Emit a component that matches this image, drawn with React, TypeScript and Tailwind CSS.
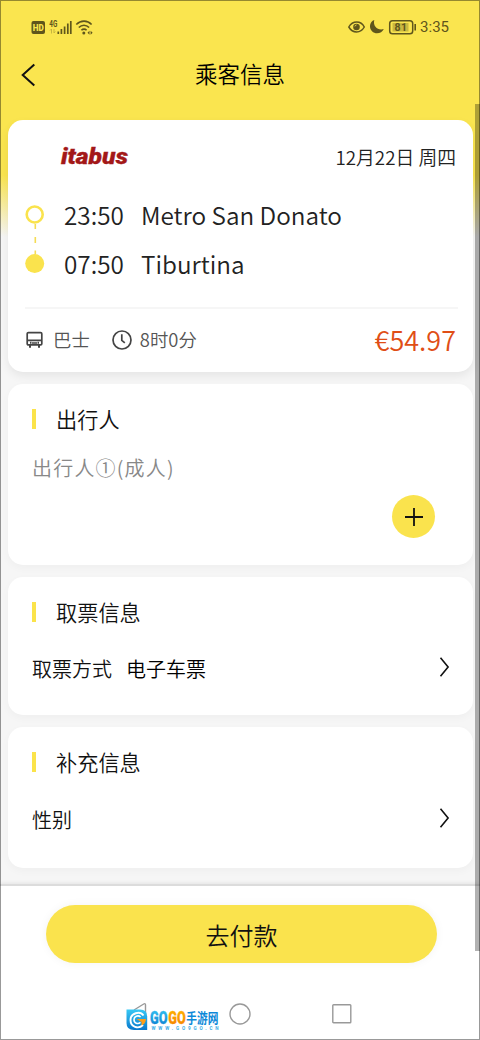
import React from 'react';

// ── Trip data ──────────────────────────────────────────────────────────────────
interface Stop {
  time: string;
  name: string;
}

const STOPS: Stop[] = [
  { time: '23:50', name: 'Metro San Donato' },
  { time: '07:50', name: 'Tiburtina' },
];

// ── Status bar ─────────────────────────────────────────────────────────────────
const StatusBar: React.FC = () => (
  <div className="flex h-[54px] items-center justify-between pl-[30px] pr-[31px] text-[#5f561c]">
    <svg width="64" height="18" viewBox="0 0 64 18" fill="none" aria-hidden="true">
      <rect x="1.5" y="3" width="13.5" height="13" rx="2" fill="currentColor" />
      <text x="2.7" y="12.8" fontSize="8.5" fontWeight="900" fontFamily="Roboto, sans-serif" fill="#fae54d" textLength="11" lengthAdjust="spacingAndGlyphs">HD</text>
      <text x="19.3" y="8.8" fontSize="8.5" fontWeight="700" fontFamily="Roboto, sans-serif" fill="currentColor" textLength="8" lengthAdjust="spacingAndGlyphs">4G</text>
      <path d="M21.5 11v4.5M21.5 11 20 12.5M24 15v-4M24 15l1.3-1.5" stroke="#c7b53f" strokeWidth="1" />
      <path d="M28.3 13.5V16M31.4 11V16M34.6 8.5V16M37.8 5.5V16M40.8 3V16" stroke="currentColor" strokeWidth="1.7" />
      <path d="M46.3 6.5c4.5-4.5 11-4.5 15.3 0M48.8 9.5c3.1-3.1 7.3-3.1 10.3 0M51.4 12.3c1.6-1.6 3.7-1.6 5.2 0" stroke="currentColor" strokeWidth="1.6" />
      <circle cx="53.8" cy="15" r="1.5" fill="currentColor" />
      <path d="m59.5 12.7-2 2 2 2zM60.6 12.7l2 2-2 2z" fill="currentColor" />
    </svg>
    <div className="flex items-center">
      <svg width="70" height="18" viewBox="0 0 70 18" fill="none" aria-hidden="true">
        <path d="M.8 9C4.6 2.3 12.9 2.3 16.3 9 12.6 15.5 4.6 15.5.8 9Z" stroke="currentColor" strokeWidth="1.5" />
        <circle cx="8.5" cy="9" r="3.3" fill="currentColor" />
        <path d="M6.9 8.4a2 2 0 0 1 1.6-1.5" stroke="#fae54d" strokeWidth=".9" />
        <path d="M26.3 2C21.5 3.6 20.7 10 24 13.2c3.6 3.6 10 2.2 11.8-2.2C30.500 13 24.500 8.500 26.300 2Z" fill="currentColor" />
        <rect x="41.7" y="2.7" width="23" height="13" rx="2.8" stroke="currentColor" strokeWidth="1.5" />
        <rect x="44.5" y="5" width="16" height="8.5" fill="#c9b840" />
        <text x="46.5" y="13" fontSize="10.5" fontWeight="700" fontFamily="Roboto, sans-serif" fill="currentColor" textLength="12.5">81</text>
        <path d="M67.2 6v6.5" stroke="currentColor" strokeWidth="1.6" />
      </svg>
      <span className="ml-[2px] font-[Roboto,sans-serif] text-[15px] font-normal leading-[18px]">3:35</span>
    </div>
  </div>
);

// ── Carrier logo ───────────────────────────────────────────────────────────────
const CarrierLogo: React.FC = () => (
  <svg width="76" height="24" viewBox="0 0 76 24" aria-label="itabus">
    <text
      x="1"
      y="19"
      fontFamily="Roboto, sans-serif"
      fontSize="21.5"
      fontWeight="900"
      fontStyle="italic"
      fill="#a31818"
      stroke="#a31818"
      strokeWidth=".3"
      textLength="67"
      lengthAdjust="spacingAndGlyphs"
    >
      itabus
    </text>
  </svg>
);

// ── Building blocks ────────────────────────────────────────────────────────────
const SectionTitle: React.FC<{ children: React.ReactNode }> = ({ children }) => (
  <div className="flex h-[31px] items-center">
    <span className="mb-[1px] h-5 w-1 bg-[#fbe34a]" />
    <h2 className="mb-0.5 ml-5 text-[21.2px] font-[350] leading-[30px]">{children}</h2>
  </div>
);

const Chevron: React.FC = () => (
  <svg width="12" height="22" viewBox="0 0 12 22" fill="none" aria-hidden="true">
    <path d="m1.5 1.8 7.6 9.2-7.6 9.2" stroke="#111" strokeWidth="1.6" />
  </svg>
);

// ── Itinerary card ─────────────────────────────────────────────────────────────
const TripCard: React.FC = () => (
  <section className="h-[252px] rounded-[15px] bg-white pl-[17px] pr-[17px] pt-[21px] shadow-[0_4px_10px_rgba(0,0,0,0.07)]">
    <div className="flex h-8 items-center justify-between pl-[35px]">
      <CarrierLogo />
      <span className="text-[18.8px] text-[#222]">12月22日 周四</span>
    </div>

    <div className="mt-[17px] flex">
      <svg width="20" height="98" viewBox="0 0 20 98" fill="none" aria-hidden="true">
        <circle cx="9.7" cy="24.5" r="8" stroke="#fae34d" strokeWidth="2.6" />
        <path d="M10.3 34v5M10.3 47v6M10.3 60.5v4" stroke="#f5dc55" strokeWidth="1.6" />
        <circle cx="9.7" cy="73.6" r="9.5" fill="#fae34d" />
      </svg>
      <div className="flex flex-col">
        {STOPS.map((s) => (
          <div key={s.time} className="flex h-[49px] items-end text-[24.3px] leading-[49px] text-[#222]">
            <span className="ml-[19px] w-[77px]">{s.time}</span>
            <span className="whitespace-nowrap">{s.name}</span>
          </div>
        ))}
      </div>
    </div>

    <div className="mt-[19px] -mr-0.5 h-0.5 bg-[#f6f6f6]" />

    <div className="flex h-[62px] items-center text-[18.4px] text-[#555]">
      <svg className="ml-[1px]" width="18" height="18" viewBox="0 0 18 18" fill="none" stroke="#444" aria-hidden="true">
        <rect x="1.2" y="1.6" width="14.6" height="12.3" rx="1.2" strokeWidth="1.7" />
        <path d="M1.5 9.3h14M6 12h5" strokeWidth="1.7" />
        <path d="M4 11.8h1.5M11.5 11.8H13M4 14v2.7M13 14v2.7" strokeWidth="2" />
      </svg>
      <span className="ml-[9px]">巴士</span>
      <svg className="ml-[22px]" width="20" height="20" viewBox="0 0 20 20" fill="none" stroke="#444" strokeWidth="1.7" aria-hidden="true">
        <circle cx="10" cy="10" r="9" />
        <path d="M9.8 4.3v6l3 2.5" />
      </svg>
      <span className="ml-2">8时0分</span>
      <span className="ml-auto text-[27px] text-[#e04e16]">€54.97</span>
    </div>
  </section>
);

// ── Page ───────────────────────────────────────────────────────────────────────
const App: React.FC = () => (
  <main className="relative flex h-[1040px] w-[480px] flex-col overflow-hidden bg-[#f6f6f6] bg-[linear-gradient(180deg,#fae54f_0,#fae54f_175px,#f6f6f6_237px)] font-['Noto_Sans_CJK_SC',sans-serif] font-[350] text-[#111]">
    <StatusBar />

    <header className="grid h-[66px] grid-cols-[60px_1fr_60px] items-start">
      <button aria-label="返回" className="pl-5 pt-[9px]">
        <svg width="16" height="24" viewBox="0 0 16 24" fill="none">
          <path d="M14.3 1.5 2.7 12l11.6 10.5" stroke="#111" strokeWidth="2" />
        </svg>
      </button>
      <h1 className="pt-[3px] text-center text-[22.5px] font-[350] leading-8 text-black">乘客信息</h1>
    </header>

    <div className="flex h-[764px] flex-col gap-3 pl-2 pr-[7px]">
      <TripCard />

      <section className="h-[181px] rounded-[15px] bg-white pl-6 pr-[38px] pt-5 shadow-[0_3px_8px_rgba(0,0,0,0.03)]">
        <SectionTitle>出行人</SectionTitle>
        <p className="mt-[17px] text-[20px] leading-8 tracking-[1.2px] text-[#888]">出行人①(成人)</p>
        <div className="mt-[11px] flex justify-end">
          <button aria-label="添加" className="flex size-[43px] items-center justify-center rounded-full bg-[#fae34d]">
            <svg width="20" height="20" viewBox="0 0 20 20" fill="none">
              <path d="M10 1v18M1 10h18" stroke="#111" strokeWidth="1.8" />
            </svg>
          </button>
        </div>
      </section>

      <section className="h-[138px] rounded-[15px] bg-white pl-6 pr-[22px] pt-5 shadow-[0_3px_8px_rgba(0,0,0,0.03)]">
        <SectionTitle>取票信息</SectionTitle>
        <div className="mt-[23px] flex h-8 items-center text-[20px]">
          <span className="pt-[3px]">取票方式</span>
          <span className="ml-[14px] pt-[3px] text-black">电子车票</span>
          <span className="ml-auto"><Chevron /></span>
        </div>
      </section>

      <section className="h-[141px] rounded-[15px] bg-white pl-6 pr-[22px] pt-5 shadow-[0_3px_8px_rgba(0,0,0,0.03)]">
        <SectionTitle>补充信息</SectionTitle>
        <div className="mt-6 flex h-8 items-center text-[20px]">
          <span className="pt-[3px]">性别</span>
          <span className="ml-auto"><Chevron /></span>
        </div>
      </section>
    </div>

    <footer className="flex h-[156px] flex-col border-t-2 border-[#dcdcdc] bg-white shadow-[0_-1px_4px_rgba(0,0,0,0.08)]">
      <button className="ml-[46px] mt-[19px] h-[58px] w-[391px] rounded-full bg-[#fae34d] text-[24px] leading-[60px] shadow-[0_0_10px_rgba(0,0,0,0.05)]">
        去付款
      </button>

      {/* System navigation keys */}
      <nav className="mt-[35px] flex">
        <svg className="ml-[126px]" width="100" height="38" viewBox="0 0 100 38" aria-hidden="true">
          <defs>
            <linearGradient id="markBlue" x1="0" y1="0" x2="0" y2="1">
              <stop offset="0" stopColor="#38c9f5" />
              <stop offset="1" stopColor="#0878cd" />
            </linearGradient>
            <linearGradient id="markOrange" x1="0" y1="0" x2="0" y2="1">
              <stop offset="0" stopColor="#ffb900" />
              <stop offset="1" stopColor="#f47c00" />
            </linearGradient>
          </defs>
          <path d="M8 12 17.7 6q1.8-1 1.8 1V26" fill="none" stroke="#999" strokeWidth="1.4" />
          <path d="M.5 11.5H14q7.2 0 7.2 7V32H8Q.5 32 .5 25Z" fill="url(#markBlue)" />
          <path d="M17.5 17.5c-3.5-5-13-2.5-13 4.5s8 9.500 12.500 5" fill="none" stroke="#fff" strokeWidth="1.9" />
          <path d="M14.600 19c-2.600-2.300-6.600-.7-6.600 2.800s3.800 4.800 6.500 2.600" fill="none" stroke="#fff" strokeWidth="1.6" />
          <path d="M10.5 21H20q-.5 5-4.5 6.5V24Z" fill="#ff9d16" />
          <g fontFamily="Roboto, sans-serif" fontWeight="900">
            <text x="24" y="26.3" fontSize="18" fill="url(#markBlue)" stroke="url(#markBlue)" strokeWidth=".3" textLength="17.5" lengthAdjust="spacingAndGlyphs">GO</text>
            <text x="42.3" y="26.3" fontSize="18" fill="url(#markOrange)" stroke="url(#markOrange)" strokeWidth=".3" textLength="17.5" lengthAdjust="spacingAndGlyphs">GO</text>
            <text x="60.3" y="25.3" fontSize="13.5" fontWeight="700" fontFamily="'Noto Sans CJK SC', sans-serif" fill="#0c88d8" textLength="32" lengthAdjust="spacingAndGlyphs">手游网</text>
            <text x="25.5" y="31.7" fontSize="4.6" fontWeight="700" fill="#3aabe6" textLength="67">WWW.GO9GO.CN</text>
          </g>
        </svg>
        <svg className="ml-[3px] mt-[5px]" width="22" height="22" viewBox="0 0 22 22" fill="none" aria-hidden="true">
          <circle cx="11" cy="11" r="10" stroke="#999" strokeWidth="1.4" />
        </svg>
        <svg className="ml-[81px] mt-[6px]" width="20" height="20" viewBox="0 0 20 20" fill="none" aria-hidden="true">
          <rect x=".8" y=".8" width="18" height="18" rx=".8" stroke="#999" strokeWidth="1.4" />
        </svg>
      </nav>
    </footer>

    {/* Scroll thumb and screen outline sit above the page */}
    <span className="absolute right-0 top-[104px] h-[847px] w-[5px] bg-black/30" />
    <span className="pointer-events-none absolute inset-0 border border-black/40" />
  </main>
);

export default App;
